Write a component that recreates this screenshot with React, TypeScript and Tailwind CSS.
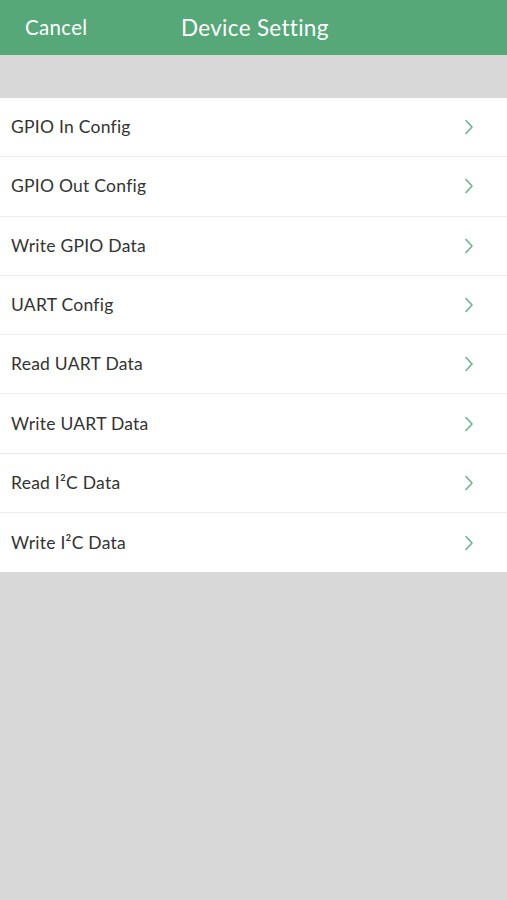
import React from 'react';

const items = [
  'GPIO In Config',
  'GPIO Out Config',
  'Write GPIO Data',
  'UART Config',
  'Read UART Data',
  'Write UART Data',
  'Read I²C Data',
  'Write I²C Data',
];

function Chevron() {
  return (
    <svg width="10" height="16" viewBox="0 0 10 16" fill="none">
      <path d="M2 1.5 L8 8 L2 14.5" stroke="#6cb38f" strokeWidth="1.6" strokeLinecap="round" strokeLinejoin="round" />
    </svg>
  );
}

export default function App() {
  return (
    <div className="min-h-[900px] bg-[#d8d8d8] font-['Lato','Noto_Sans',sans-serif]">
      <header className="flex h-[55px] items-center bg-[#56a878] text-white">
        <button className="w-[181px] pl-[25px] text-left text-[20.5px] tracking-[0.3px]">Cancel</button>
        <h1 className="text-[22.5px] tracking-[0.3px]">Device Setting</h1>
      </header>

      <div className="h-[43px]" />

      <ul className="bg-white">
        {items.map((item, i) => (
          <li
            key={item}
            className={`flex h-[59.3px] items-center justify-between pl-[11px] pr-[33px] text-[17.5px] tracking-[0.25px] text-[#333333] ${
              i < items.length - 1 ? 'border-b border-[#ececec]' : ''
            }`}
          >
            <span>{item}</span>
            <Chevron />
          </li>
        ))}
      </ul>
    </div>
  );
}
